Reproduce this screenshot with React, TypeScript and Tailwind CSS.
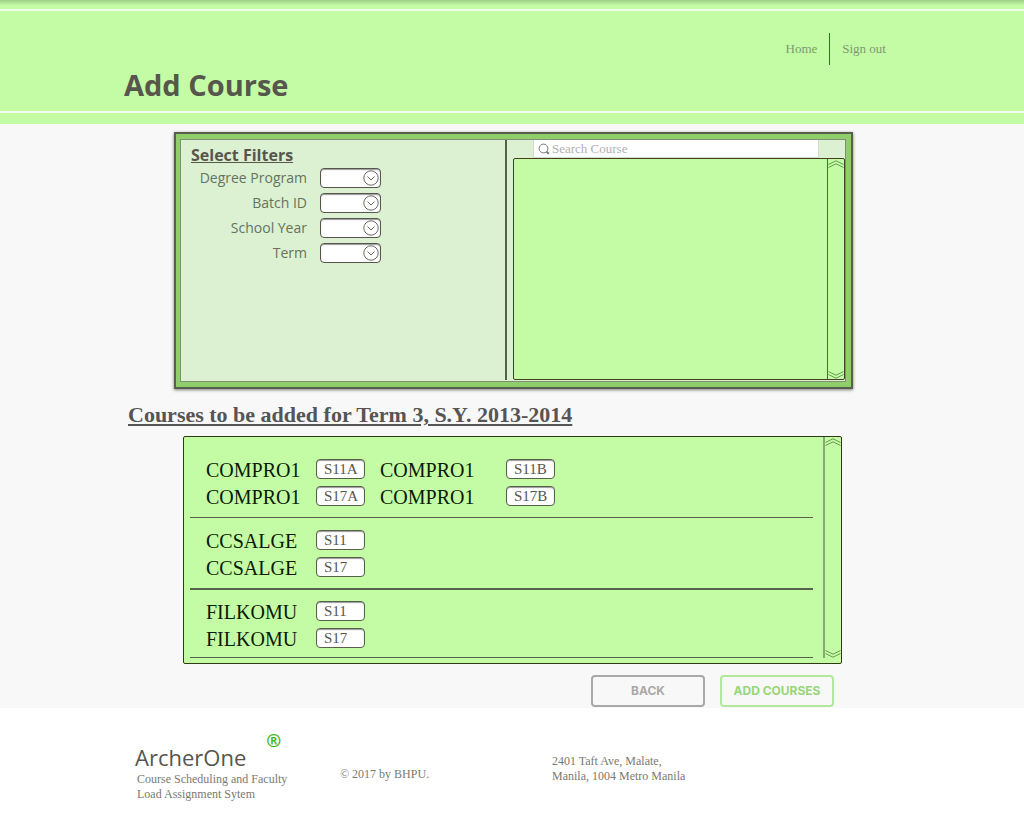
import React from "react";

const filters = ["Degree Program", "Batch ID", "School Year", "Term"];

type Section = { course: string; section: string };

const groups: { rule: string; rows: Section[][] }[] = [
  {
    rule: "pt-[22px] pb-[11px] border-b",
    rows: [
      [
        { course: "COMPRO1", section: "S11A" },
        { course: "COMPRO1", section: "S11B" },
      ],
      [
        { course: "COMPRO1", section: "S17A" },
        { course: "COMPRO1", section: "S17B" },
      ],
    ],
  },
  {
    rule: "pt-3 pb-[11px] border-b-2",
    rows: [
      [{ course: "CCSALGE", section: "S11" }],
      [{ course: "CCSALGE", section: "S17" }],
    ],
  },
  {
    rule: "pt-[11px] pb-[9px] border-b",
    rows: [
      [{ course: "FILKOMU", section: "S11" }],
      [{ course: "FILKOMU", section: "S17" }],
    ],
  },
];

const serif = "font-['Liberation_Serif',serif]";
const sans = "font-['Open_Sans',sans-serif]";

function DoubleChevron({ down = false }: { down?: boolean }) {
  return (
    <svg
      viewBox="0 0 16 8"
      className={down ? "h-2 w-4 rotate-180" : "h-2 w-4"}
      fill="none"
      stroke="#6a9a50"
      strokeWidth="1"
      aria-hidden="true"
    >
      <path d="M0.5 4.5 L8 0.8 L15.5 4.5 M0.5 7.5 L8 3.8 L15.5 7.5" />
    </svg>
  );
}

function FilterSelect({ label }: { label: string }) {
  const id = label.toLowerCase().replace(" ", "-");
  return (
    <div className="flex h-5 items-center gap-[13px]">
      <label htmlFor={id} className="w-[126px] text-right text-sm leading-[18px] text-[#66735e]">
        {label}
      </label>
      <div className="relative h-5 w-[61px]">
        <select
          id={id}
          className="block h-5 w-full appearance-none rounded border border-[#57564c] bg-white shadow-[inset_0_1px_1px_#9a9a9a]"
        />
        <svg
          viewBox="0 0 16 16"
          className="pointer-events-none absolute top-0.5 right-0.5 size-4"
          fill="none"
          stroke="#6a6960"
          strokeWidth="1"
          aria-hidden="true"
        >
          <circle cx="8" cy="8" r="7.2" />
          <path d="M4.5 6.5 L8 10 L11.5 6.5" />
        </svg>
      </div>
    </div>
  );
}

export default function App() {
  return (
    <div className={`min-h-screen bg-white text-[#57564c] ${sans}`}>
      <header className="bg-[#c4fca6]">
        <div className="h-[9px] bg-linear-to-b from-[#9fce87] to-[#c4fca6] to-60%" />
        <div className="border-y-2 border-[#f2fbe9]">
          <div className="mx-auto flex h-[100px] max-w-[980px] items-start justify-between pr-[116px] pl-[102px]">
            <h1 className="self-end pb-[5px] text-[29px] leading-[43px] font-bold">Add Course</h1>
            <nav className={`mt-[22px] flex h-8 items-center text-[13px] text-[#7d9a6d] ${serif}`}>
              <a href="#home" className="pr-3">
                Home
              </a>
              <a href="#signout" className="flex h-8 items-center border-l border-[#57564c] pl-3">
                Sign out
              </a>
            </nav>
          </div>
        </div>
        <div className="h-[11px]" />
      </header>

      <main className="bg-[#f8f8f8] pt-2 pb-px">
        <div className="mx-auto max-w-[980px]">
          <section className="mr-[149px] ml-[152px] border-2 border-[#57604a] bg-[#8fce6b] py-[5px] pr-[5px] pl-1 shadow-[0_1px_3px_rgba(0,0,0,0.5)]">
            <div className="flex border border-[#7f8f72] bg-[#dcf0d2]">
              <div className="w-[324px]">
                <h2 className="pt-[3px] pb-px pl-2.5 text-base leading-6 font-bold underline">
                  Select Filters
                </h2>
                <div className="flex flex-col gap-[5px]">
                  {filters.map((label) => (
                    <FilterSelect key={label} label={label} />
                  ))}
                </div>
              </div>
              <div className="mr-1.5 mb-px w-0.5 bg-[#57604a]" />
              <div className="flex flex-1 flex-col pb-px">
                <label className="mr-[26px] ml-5 flex h-[18px] items-center border border-t-0 border-[#d3ddcc] bg-white pl-1">
                  <svg
                    viewBox="0 0 12 12"
                    className="mr-0.5 size-3"
                    fill="none"
                    stroke="#777"
                    strokeWidth="1"
                    aria-hidden="true"
                  >
                    <circle cx="5.5" cy="5.5" r="4.4" />
                    <path d="M8.6 8.6 L10.8 10.8" strokeWidth="2" />
                  </svg>
                  <input
                    type="text"
                    placeholder="Search Course"
                    aria-label="Search Course"
                    className={`h-4 min-w-0 flex-1 text-[13px] leading-4 outline-none placeholder:text-[#b0b0b0] ${serif}`}
                  />
                </label>
                <div className="flex h-[222px] rounded-xs border border-[#42401f] bg-[#c4fca6]">
                  <div className="flex-1" />
                  <div className="flex w-[17px] flex-col items-center justify-between border-l border-[#57604a] pt-px">
                    <DoubleChevron />
                    <DoubleChevron down />
                  </div>
                </div>
              </div>
            </div>
          </section>

          <h2 className={`mt-2.5 ml-[106px] text-[22px] leading-8 font-bold text-[#555] underline ${serif}`}>
            Courses to be added for Term 3, S.Y. 2013-2014
          </h2>

          <section className="mt-[5px] mr-40 ml-[161px] flex rounded-xs border border-[#2f3a14] bg-[#c4fca6]">
            <div className="mr-2.5 mb-[5px] ml-1.5 flex-1">
              {groups.map((group) => (
                <div
                  key={group.rows[0][0].course}
                  className={`flex flex-col gap-[7px] border-[#57604a] pl-4 ${group.rule}`}
                >
                  {group.rows.map((row) => (
                    <div
                      key={row[0].section}
                      className="grid h-5 grid-cols-[110px_64px_126px_50px] items-start"
                    >
                      {row.map(({ course, section }) => (
                        <React.Fragment key={section}>
                          <label
                            htmlFor={`${course}-${section}`}
                            className={`text-xl leading-[22px] text-[#0a1a05] ${serif}`}
                          >
                            {course}
                          </label>
                          <input
                            id={`${course}-${section}`}
                            type="text"
                            defaultValue={section}
                            className={`h-5 w-[49px] rounded border border-[#57604a] bg-white pl-[7px] text-[15px] leading-[18px] text-[#57564c] shadow-[inset_0_1px_1px_#9a9a9a] ${serif}`}
                          />
                        </React.Fragment>
                      ))}
                    </div>
                  ))}
                </div>
              ))}
            </div>
            <div className="mb-[5px] flex w-[18px] flex-col items-center justify-between border-l-2 border-[#86a873] pt-px">
              <DoubleChevron />
              <DoubleChevron down />
            </div>
          </section>

          <div className="mt-[11px] mr-[168px] flex justify-end gap-[15px] font-['Inter',sans-serif] text-xs font-bold">
            <button
              type="button"
              className="h-8 w-[114px] rounded border-2 border-[#a9a9a9] text-[#a9a9a9]"
            >
              BACK
            </button>
            <button
              type="button"
              className="h-8 w-[114px] rounded border-2 border-[#b2e89a] text-[#97d67a]"
            >
              ADD COURSES
            </button>
          </div>
        </div>
      </main>

      <footer className={`mx-auto flex max-w-[980px] text-xs leading-[15px] text-[#7b7a70] ${serif}`}>
        <div className="w-[205px] pt-[22px] pl-[113px] whitespace-nowrap">
          <div className={`flex items-start ${sans}`}>
            <span className="pt-3 text-[22px] leading-[30px] text-[#57564c]">ArcherOne</span>
            <span className="ml-5 text-lg leading-5 font-bold text-[#3fb618]">®</span>
          </div>
          <p className="pl-0.5">
            Course Scheduling and Faculty
            <br />
            Load Assignment Sytem
          </p>
        </div>
        <p className="w-[213px] pt-[59px] pl-[113px] whitespace-nowrap">© 2017 by BHPU.</p>
        <address className="pt-[46px] pl-[112px] whitespace-nowrap not-italic">
          2401 Taft Ave, Malate,
          <br />
          Manila, 1004 Metro Manila
        </address>
      </footer>
    </div>
  );
}
